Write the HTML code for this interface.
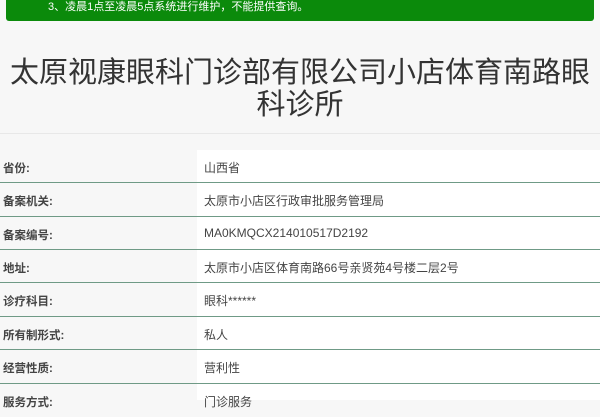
<!DOCTYPE html>
<html><head><meta charset="utf-8"><style>
body{margin:0;width:600px;height:400px;overflow:hidden;background:#f7f7f7;font-family:"Liberation Sans","Noto Sans CJK SC",sans-serif;position:relative}
.ban{position:absolute;left:6px;top:-6px;width:588px;height:27px;background:#0b8a0b;border-radius:3px;color:#fff;font-size:11px}
.ban span{position:absolute;left:42px;top:4px}
h1{position:absolute;left:0;top:57px;width:600px;margin:0;text-align:center;font-weight:normal;font-size:29px;line-height:32px;color:#333}
.sep{position:absolute;left:0;top:133px;width:600px;height:1px;background:#e8e8e8}
.white{position:absolute;left:197px;top:150px;width:403px;height:250px;background:#fff}
.row{position:absolute;left:0;width:600px;height:33px;font-size:11.5px;color:#333}
.row b{position:absolute;left:3px;top:10px;font-weight:bold;color:#444}
.row span{position:absolute;left:204px;top:9px;font-size:12px;color:#444}
.ln{position:absolute;left:0;width:600px;height:1px;background:#6f9a86}
</style></head><body>
<div class="ban"><span>3、凌晨1点至凌晨5点系统进行维护，不能提供查询。</span></div>
<h1>太原视康眼科门诊部有限公司小店体育南路眼<br>科诊所</h1>
<div class="sep"></div>
<div class="white"></div>
<div class="row" style="top:150px"><b>省份:</b><span>山西省</span></div>
<div class="ln" style="top:182px"></div>
<div class="row" style="top:183px"><b>备案机关:</b><span>太原市小店区行政审批服务管理局</span></div>
<div class="ln" style="top:216px"></div>
<div class="row" style="top:217px"><b>备案编号:</b><span>MA0KMQCX214010517D2192</span></div>
<div class="ln" style="top:249px"></div>
<div class="row" style="top:250px"><b>地址:</b><span>太原市小店区体育南路66号亲贤苑4号楼二层2号</span></div>
<div class="ln" style="top:282px"></div>
<div class="row" style="top:283px"><b>诊疗科目:</b><span>眼科******</span></div>
<div class="ln" style="top:316px"></div>
<div class="row" style="top:317px"><b>所有制形式:</b><span>私人</span></div>
<div class="ln" style="top:349px"></div>
<div class="row" style="top:350px"><b>经营性质:</b><span>营利性</span></div>
<div class="ln" style="top:383px"></div>
<div class="row" style="top:384px"><b>服务方式:</b><span>门诊服务</span></div>
</body></html>
